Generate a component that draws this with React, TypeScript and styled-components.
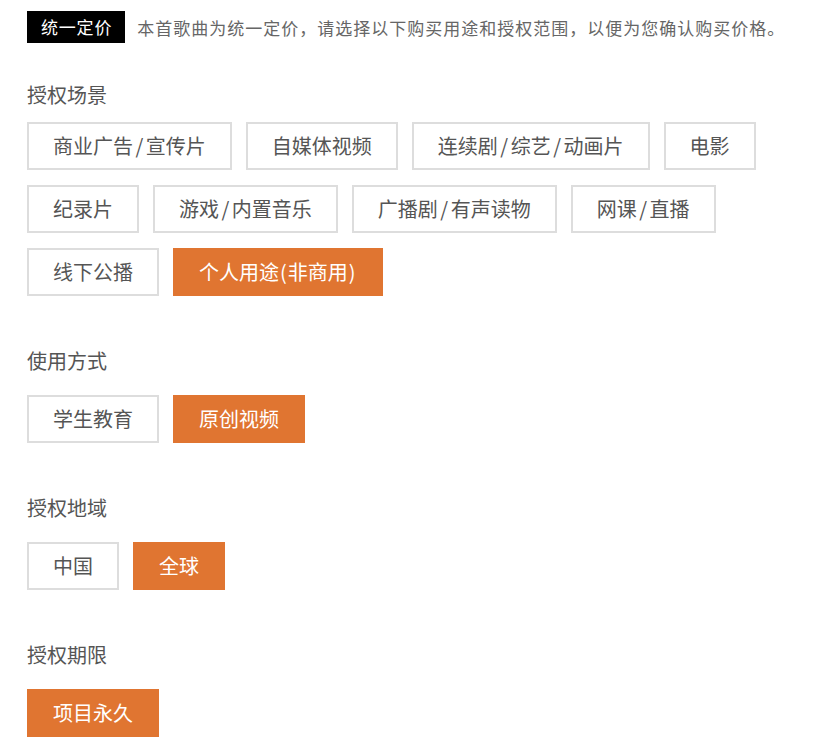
import React from "react";
import styled, { createGlobalStyle } from "styled-components";

const Global = createGlobalStyle`
  html, body { margin: 0; padding: 0; background: #fff; }
  body { font-family: "Noto Sans CJK SC", "Noto Sans", sans-serif; }
`;

const Page = styled.div`
  padding: 11px 0 0 27px;
  width: 830px;
  box-sizing: border-box;
`;

const Header = styled.div`
  display: flex;
  align-items: center;
  height: 32px;
`;

const Badge = styled.span`
  display: inline-block;
  background: #000;
  color: #fff;
  font-size: 17px;
  letter-spacing: 0.8px;
  line-height: 32px;
  height: 32px;
  padding: 0 13px 0 14px;
`;

const Desc = styled.span`
  margin-left: 12px;
  color: #666;
  font-size: 17px;
  letter-spacing: 1px;
  white-space: nowrap;
`;

const Section = styled.section<{ $first?: boolean }>`
  margin-top: ${(p) => (p.$first ? "38px" : "51px")};
`;

const Title = styled.h3<{ $first?: boolean }>`
  margin: 0 0 ${(p) => (p.$first ? "13px" : "20px")} 0;
  font-size: 20px;
  line-height: 28px;
  font-weight: 400;
  color: #555;
`;

const Options = styled.div`
  display: flex;
  flex-wrap: wrap;
  column-gap: 14px;
  row-gap: 15px;
  max-width: 770px;
`;

const Option = styled.button<{ $active?: boolean }>`
  box-sizing: border-box;
  height: 48px;
  padding: 0 24px;
  font-family: "Noto Sans CJK SC", "Noto Sans", sans-serif;
  font-size: 20px;
  line-height: 44px;
  border: 2px solid ${(p) => (p.$active ? "#e07531" : "#dddddd")};
  background: ${(p) => (p.$active ? "#e07531" : "#fff")};
  color: ${(p) => (p.$active ? "#fff" : "#555")};
  cursor: pointer;
  white-space: nowrap;
`;

const Punct = styled.span<{ $wide?: boolean }>`
  margin: 0 ${(p) => (p.$wide ? "2.5px" : "1px")};
`;

function renderLabel(label: string) {
  return label.split(/([/()])/).map((part, i) =>
    part === "/" || part === "(" || part === ")" ? (
      <Punct key={i} $wide={part === "/"}>
        {part}
      </Punct>
    ) : (
      <React.Fragment key={i}>{part}</React.Fragment>
    )
  );
}

type Group = { title: string; options: string[]; active: string };

const groups: Group[] = [
  {
    title: "授权场景",
    options: [
      "商业广告/宣传片",
      "自媒体视频",
      "连续剧/综艺/动画片",
      "电影",
      "纪录片",
      "游戏/内置音乐",
      "广播剧/有声读物",
      "网课/直播",
      "线下公播",
      "个人用途(非商用)",
    ],
    active: "个人用途(非商用)",
  },
  { title: "使用方式", options: ["学生教育", "原创视频"], active: "原创视频" },
  { title: "授权地域", options: ["中国", "全球"], active: "全球" },
  { title: "授权期限", options: ["项目永久"], active: "项目永久" },
];

export default function App() {
  return (
    <>
      <Global />
      <Page>
        <Header>
          <Badge>统一定价</Badge>
          <Desc>本首歌曲为统一定价，请选择以下购买用途和授权范围，以便为您确认购买价格。</Desc>
        </Header>
        {groups.map((g, i) => (
          <Section key={g.title} $first={i === 0}>
            <Title $first={i === 0}>{g.title}</Title>
            <Options>
              {g.options.map((o) => (
                <Option key={o} $active={o === g.active}>
                  {renderLabel(o)}
                </Option>
              ))}
            </Options>
          </Section>
        ))}
      </Page>
    </>
  );
}
